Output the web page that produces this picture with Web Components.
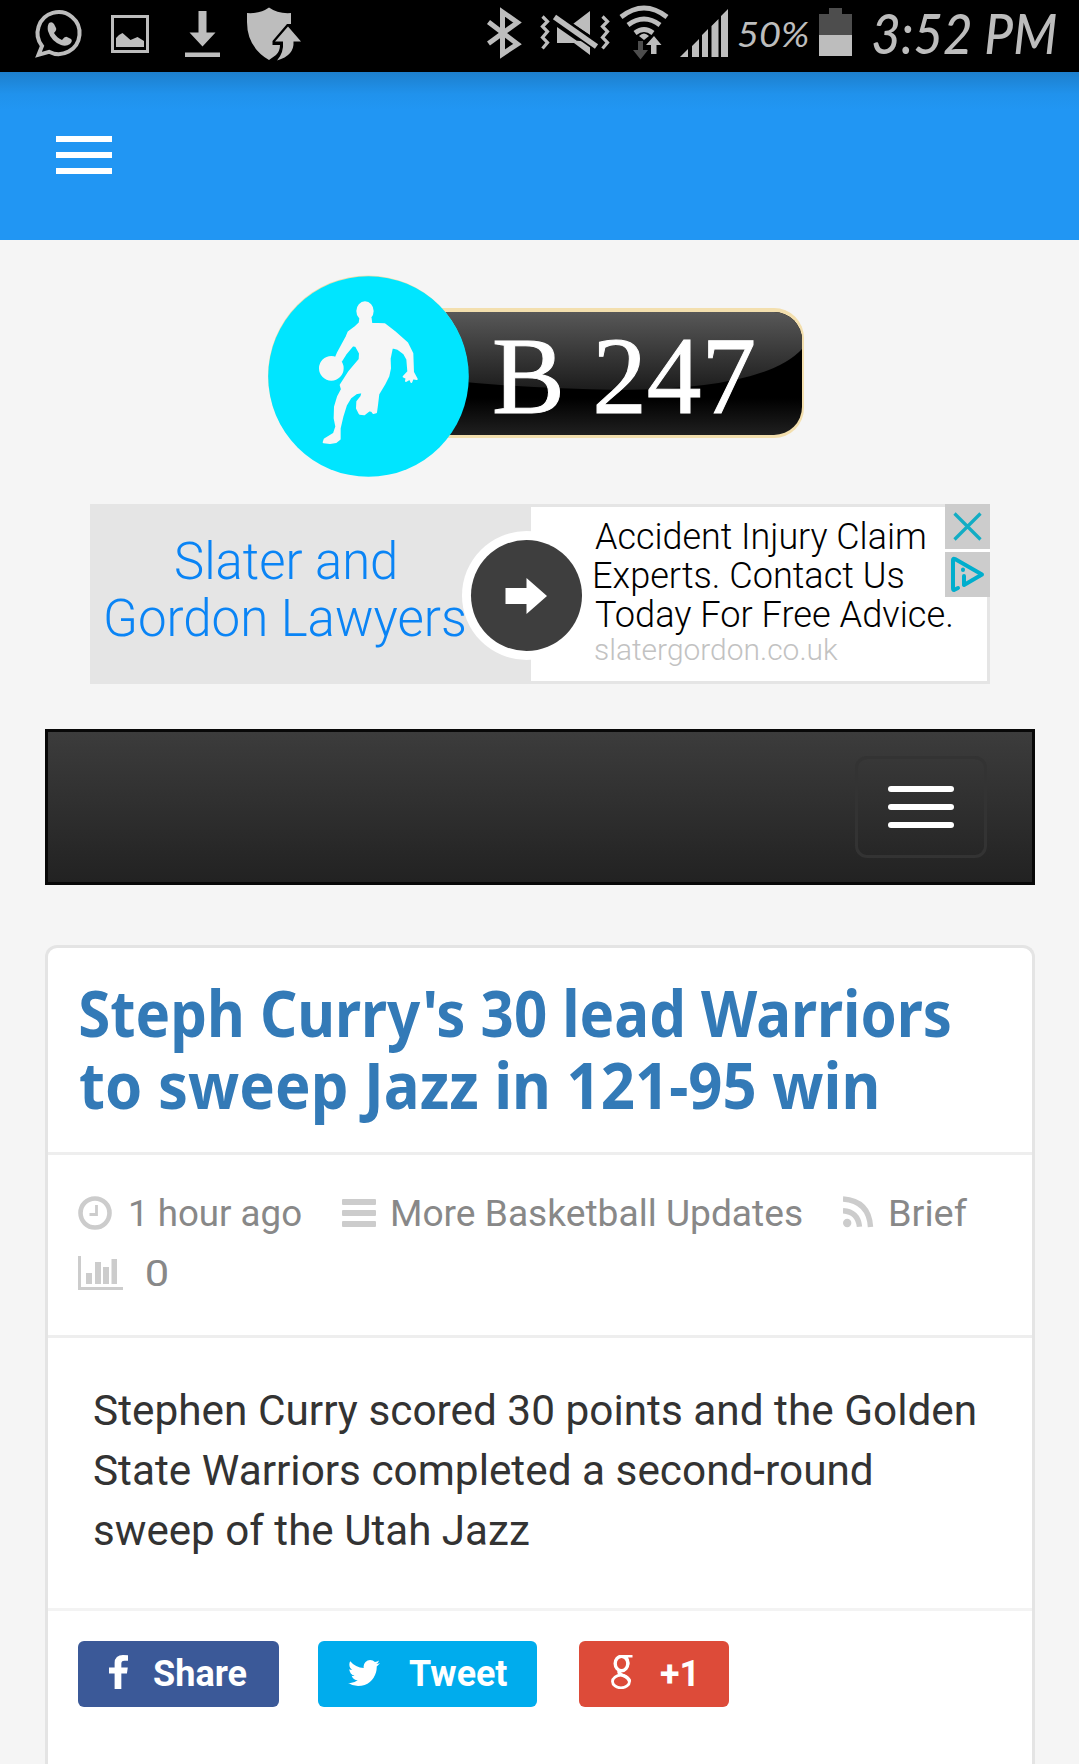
<!DOCTYPE html>
<html lang="en">
<head>
<meta charset="utf-8">
<title>B 247</title>
<style>
html, body { margin: 0; padding: 0; }
body {
  width: 1079px;
  height: 1764px;
  overflow: hidden;
  background: #f5f5f5;
  font-family: Roboto, "Liberation Sans", sans-serif;
}
</style>
</head>
<body>
<b-app>
  <status-bar></status-bar>
  <app-bar></app-bar>
  <site-logo></site-logo>
  <ad-banner>
    <fit-text slot="name" width="219">Slater and</fit-text>
    <fit-text slot="name" width="359">Gordon Lawyers</fit-text>
    <fit-text slot="copy" width="330">Accident Injury Claim</fit-text>
    <fit-text slot="copy" width="308">Experts. Contact Us</fit-text>
    <fit-text slot="copy" width="356">Today For Free Advice.</fit-text>
    <fit-text slot="url" width="243">slatergordon.co.uk</fit-text>
  </ad-banner>
  <nav-bar></nav-bar>
  <news-card>
    <fit-text slot="title" width="870">Steph Curry's 30 lead Warriors</fit-text>
    <fit-text slot="title" width="797">to sweep Jazz in 121-95 win</fit-text>
    <meta-item slot="meta" icon="clock"><fit-text width="170">1 hour ago</fit-text></meta-item>
    <meta-item slot="meta" icon="list"><fit-text width="409">More Basketball Updates</fit-text></meta-item>
    <meta-item slot="meta" icon="rss"><fit-text width="76">Brief</fit-text></meta-item>
    <meta-item slot="stats" icon="chart"><fit-text width="20">0</fit-text></meta-item>
    <fit-text slot="body" width="881">Stephen Curry scored 30 points and the Golden</fit-text>
    <fit-text slot="body" width="777">State Warriors completed a second-round</fit-text>
    <fit-text slot="body" width="435">sweep of the Utah Jazz</fit-text>
    <share-button slot="share" kind="facebook"><fit-text width="93">Share</fit-text></share-button>
    <share-button slot="share" kind="twitter"><fit-text width="98">Tweet</fit-text></share-button>
    <share-button slot="share" kind="google"><fit-text width="33">+1</fit-text></share-button>
  </news-card>
</b-app>

<script>
(function() {
  class BaseElement extends HTMLElement {
    constructor() {
      super();
      let shadowRoot = this.attachShadow({mode: 'open'});
      shadowRoot.innerHTML = this.constructor.template;
    }
  }

  // One line of text, stretched so its ink is exactly `width` pixels wide
  class FitText extends BaseElement {
    static get template() {
      return `
<style>
:host { display: block; flex: none; white-space: nowrap; }
span { display: inline-block; transform-origin: 0 50%; }
</style>
<span><slot></slot></span>
`
    }
    connectedCallback() {
      let width = Number(this.getAttribute('width'));
      let style = getComputedStyle(this);
      let ctx = document.createElement('canvas').getContext('2d');
      ctx.font = `${style.fontStyle} ${style.fontWeight} ${style.fontSize} ${style.fontFamily}`;
      let m = ctx.measureText(this.textContent);
      let scale = width / (m.actualBoundingBoxLeft + m.actualBoundingBoxRight);
      this.style.width = width + 'px';
      this.shadowRoot.querySelector('span').style.transform =
        `scaleX(${scale}) translateX(${m.actualBoundingBoxLeft}px)`;
    }
  }

  class BApp extends BaseElement {
    static get template() {
      return `
<style>
:host { display: flex; flex-direction: column; height: 1764px; }
</style>
<slot></slot>
`
    }
  }

  class StatusBar extends BaseElement {
    static get template() {
      return `
<style>
:host {
  display: flex;
  height: 72px;
  background: #000;
  color: #bdbdbd;
  fill: #bdbdbd;
}
svg { display: block; flex: none; height: 72px; }
.spacer { flex: 1; }
.percent { font: italic 400 34px Lato, sans-serif; line-height: 68px; margin: 0 1px 0 7px; }
.time { font: italic 500 56px Lato, sans-serif; line-height: 65px; margin: 0 23px 0 19px; }
</style>
<svg width="100" viewBox="0 0 100 72">
  <path d="M42 46A21 21 0 1 1 49 51.800L38.500 54.800Z" fill="none" stroke="#bdbdbd" stroke-width="4"/>
  <path d="M49 23q3-2 5 1l2 4q1 2-2 5 3 5 8 7 3-4 5-3l4 2q2 2-1 5-4 3-9 1-10-4-13-14-1-5 1-8z"/>
</svg>
<svg width="70" viewBox="100 0 70 72">
  <path d="M112.500 16.500h35v35h-35z" fill="none" stroke="#bdbdbd" stroke-width="3"/>
  <path d="M116 47V38l3-3 3.500-2 8 7 7-3 6.500 4v6z"/>
</svg>
<svg width="65" viewBox="170 0 65 72">
  <path d="M198.500 11h8v21.500h9L202.500 46.500 189.500 32.500h9zM185 52.500h35v4.500h-35z"/>
</svg>
<svg width="80" viewBox="235 0 80 72">
  <path d="M247 13q13 1 22-5.500 9 6.500 22 5.500v11h-4L272.500 41v4h7.500q0 6-4 10l-7 5q-22-13-22-38z"/>
  <path d="M288 26.500l13 15h-7.500q1 14-16.500 19 7-8 6-19h-8z"/>
</svg>
<div class="spacer"></div>
<svg width="54" viewBox="480 0 54 72">
  <path d="M488.500 22l29 22L502.500 54V12l15 10.500-29 21" fill="none" stroke="#bdbdbd" stroke-width="5"/>
</svg>
<svg width="80" viewBox="534 0 80 72">
  <path d="M542.500 16.500l5 5-5 5 5 5-5 6 5 5-5 6M602.500 16.500l5 5-5 5 5 5-5 6 5 5-5 6" fill="none" stroke="#bdbdbd" stroke-width="3.200"/>
  <path d="M557 27l23 16h-23zM573 24l17-13v24zM570 40l20 2v13z"/>
  <path d="M554 16l44 31" stroke="#000" stroke-width="10"/>
  <path d="M554.500 17l42 29.500" stroke="#bdbdbd" stroke-width="5.500"/>
</svg>
<svg width="61" viewBox="614 0 61 72">
  <path d="M621 17q23-18 46 0M628 25q16-12 32 0M635 33q9-7 18 0" fill="none" stroke="#bdbdbd" stroke-width="4.800"/>
  <path d="M639 36q5-5 10 0l-5 4z"/>
  <path d="M638 41h5v9h5l-7.500 9.500L633 50h5z" fill="#4d4d4d"/>
  <path d="M651 54h5.500v-9h5L654 36l-8 9h5z"/>
</svg>
<svg width="56" viewBox="675 0 56 72">
  <path d="M680 57l8-8v8zM692 57V46l7-7v18zM702 57V35l6-6v28zM711.500 57V26l7-7v38zM721 57V16l7-7v48z"/>
</svg>
<fit-text class="percent" width="71">50%</fit-text>
<svg width="44" viewBox="810 0 44 72">
  <path d="M819 14h10V8h13v6h10v21h-33z" fill="#4d4d4d"/>
  <path d="M819 35h33v21h-33z"/>
</svg>
<fit-text class="time" width="183">3:52 PM</fit-text>
`
    }
  }

  class AppBar extends BaseElement {
    static get template() {
      return `
<style>
:host {
  display: flex;
  flex-direction: column;
  gap: 10px;
  box-sizing: border-box;
  height: 168px;
  padding: 64px 56px 0;
  background: linear-gradient(#1d7fcd, #2092ec 22px, #2196f3 38px);
}
i { width: 56px; height: 6px; background: #fff; }
</style>
<i></i><i></i><i></i>
`
    }
  }

  class SiteLogo extends BaseElement {
    static get template() {
      return `
<style>
:host { display: block; padding: 34px 0 26px 267px; }
svg { display: block; }
text { font-family: "Liberation Serif", serif; font-size: 111px; fill: #fff; stroke: #fff; stroke-width: 1px; }
</style>
<svg width="540" height="204" viewBox="267 274 540 204">
  <defs>
    <linearGradient id="gloss" x1="0" y1="0" x2="0" y2="1">
      <stop offset="0" stop-color="#585858"/>
      <stop offset="1" stop-color="#1c1c1c"/>
    </linearGradient>
    <linearGradient id="base" x1="0" y1="0" x2="0" y2="1">
      <stop offset=".7" stop-color="#000"/>
      <stop offset="1" stop-color="#202020"/>
    </linearGradient>
    <clipPath id="pill"><rect x="400" y="312" width="402" height="123" rx="28"/></clipPath>
  </defs>
  <rect x="398" y="308" width="406" height="130" rx="30" fill="#f3dfae"/>
  <rect x="400" y="312" width="402" height="123" rx="28" fill="url(#base)"/>
  <path clip-path="url(#pill)" d="M400 312H802V349Q765 389 620 390Q490 388 400 374Z" fill="url(#gloss)"/>
  <circle cx="368" cy="375.500" r="100" fill="#f2dfa8"/>
  <circle cx="368.500" cy="376.500" r="100.300" fill="#00e5ff"/>
  <g transform="translate(250 260) scale(.33333)" fill="#f6f6f6" stroke="#f6f6f6" stroke-width="6" stroke-linejoin="round">
    <ellipse cx="345" cy="153" rx="23" ry="26"/>
    <path d="M331 175L329 189 314 203 296 216 290 230 264 278 258 292 274 302 288 280 308 256 318 258 330 280 329 298 298 335 272 375 276 388 264 410 255 440 254 475 259 500 252 521 224 538 221 547 240 549 258 546 269 537 269 505 277 470 288 435 302 412 318 400 338 396 334 410 322 425 321 445 329 461 343 463 358 451 366 453 370 459 378 457 381 435 385 402 403 372 415 348 420 325 419 296 426 262 443 266 462 280 472 298 475 335 461 350 470 354 468 363 480 356 484 366 488 355 500 357 489 337 487 280 472 250 434 216 404 193 364 191 362 175Z"/>
    <circle cx="244" cy="325" r="34"/>
  </g>
  <text x="492" y="413" textLength="264" lengthAdjust="spacingAndGlyphs">B 247</text>
</svg>
`
    }
  }

  class AdBanner extends BaseElement {
    static get template() {
      return `
<style>
:host {
  display: flex;
  position: relative;
  box-sizing: border-box;
  width: 900px;
  height: 180px;
  margin-left: 90px;
  padding: 3px 3px 3px 0;
  background: #e5e5e5;
  font-weight: 300;
}
.name {
  display: flex;
  flex-direction: column;
  align-items: center;
  box-sizing: border-box;
  width: 441px;
  padding: 26px 51px 0 0;
  color: #0a84f5;
  font-size: 51px;
  line-height: 57px;
}
.copy {
  flex: 1;
  padding: 10px 0 0 64px;
  background: #fff;
  color: #000;
  font-size: 37px;
  line-height: 39px;
}
.url { color: #c2c2c2; font-size: 30px; line-height: 32px; }
.arrow { position: absolute; left: 372px; top: 27px; }
.controls {
  position: absolute;
  right: 0;
  top: 0;
  display: flex;
  flex-direction: column;
  gap: 3px;
  background: #fff;
}
.controls svg { display: block; background: #ccc; }
</style>
<div class="name"><slot name="name"></slot></div>
<div class="copy">
  <slot name="copy"></slot>
  <div class="url"><slot name="url"></slot></div>
</div>
<svg class="arrow" width="130" height="130" viewBox="462 531 130 130">
  <circle cx="526.500" cy="595.500" r="64.500" fill="#fff"/>
  <circle cx="526.500" cy="595.500" r="55.500" fill="#3e3e3e"/>
  <path d="M505.500 588H526.500V578L547 596 526.500 614V604H505.500Z" fill="#fff"/>
</svg>
<div class="controls">
  <svg width="45" height="45" fill="none" stroke="#12adc4" stroke-width="3.200">
    <path d="M9.500 9.500l26 26M35.500 9.500l-26 26"/>
  </svg>
  <svg width="45" height="45" fill="none" stroke="#00aecd" stroke-width="4" stroke-linejoin="round" stroke-linecap="round">
    <path d="M13 36l-4 2q-1 0-1-2V8q0-2 2-1l27 15.500L19 33V24M18 17.500v.5"/>
  </svg>
</div>
`
    }
  }

  class NavBar extends BaseElement {
    static get template() {
      return `
<style>
:host {
  display: flex;
  justify-content: flex-end;
  align-items: flex-start;
  box-sizing: border-box;
  width: 990px;
  height: 156px;
  margin: 45px 0 60px 45px;
  padding: 24px 45px;
  border: 3px solid #080808;
  background: linear-gradient(#3c3c3c, #222);
}
div {
  display: flex;
  flex-direction: column;
  gap: 12px;
  box-sizing: border-box;
  width: 132px;
  height: 102px;
  padding: 27px 30px;
  border: 3px solid #333;
  border-radius: 12px;
}
i { width: 66px; height: 6px; border-radius: 3px; background: #fff; }
</style>
<div><i></i><i></i><i></i></div>
`
    }
  }

  class NewsCard extends BaseElement {
    static get template() {
      return `
<style>
:host {
  display: block;
  flex: 1;
  box-sizing: border-box;
  width: 990px;
  margin-left: 45px;
  border: 3px solid #e4e4e4;
  border-bottom: 0;
  border-radius: 12px 12px 0 0;
  background: #fff;
}
.title {
  padding: 29px 32px 31px;
  border-bottom: 3px solid #eee;
  color: #337ab7;
  font-family: "Noto Sans", "Open Sans", sans-serif;
  font-size: 64px;
  font-weight: 700;
  line-height: 72px;
}
.meta {
  padding: 29px 30px 31px;
  border-bottom: 3px solid #eee;
  color: #888;
  font-size: 37px;
  line-height: 60px;
}
.row { display: flex; gap: 41px; }
.body {
  padding: 43px 46px 47px;
  border-bottom: 3px solid #f3f3f3;
  color: #333;
  font-size: 42px;
  line-height: 60px;
}
.share { display: flex; padding: 30px; }
</style>
<div class="title"><slot name="title"></slot></div>
<div class="meta">
  <div class="row"><slot name="meta"></slot></div>
  <div class="row"><slot name="stats"></slot></div>
</div>
<div class="body"><slot name="body"></slot></div>
<div class="share"><slot name="share"></slot></div>
`
    }
  }

  const META_ICONS = {
    clock: `<svg width="34" height="34" style="margin-right:19px">
      <circle cx="17" cy="17" r="14.500" fill="none" stroke="#ccc" stroke-width="4.600"/>
      <path d="M18.500 9v9.500h-7" fill="none" stroke="#ccc" stroke-width="2.800"/></svg>`,
    list: `<svg width="34" height="34" style="margin-right:17px">
      <rect y="3" width="34" height="6" rx="1"/><rect y="14" width="34" height="6" rx="1"/>
      <rect y="25" width="34" height="6" rx="1"/></svg>`,
    rss: `<svg width="31" height="34" style="margin-right:17px">
      <circle cx="4.200" cy="27" r="4.200"/>
      <path d="M0 14.700q15 1 16.500 16M0 3q26 2 27.500 28" fill="none" stroke="#ccc" stroke-width="5.400"/></svg>`,
    chart: `<svg width="45" height="34" style="margin-right:24px">
      <path d="M0 0h3v31h42v3H0zM8 17h6v11H8zM17 6h6v22h-6zM25 11h6v17h-6zM33.500 3h5.500v25h-5.500z"/></svg>`
  };

  class MetaItem extends BaseElement {
    static get template() {
      return `
<style>
:host { display: flex; }
svg { display: block; flex: none; margin-top: 12px; fill: #ccc; }
</style>
<slot></slot>
`
    }
    connectedCallback() {
      let slot = this.shadowRoot.querySelector('slot');
      slot.insertAdjacentHTML('beforebegin', META_ICONS[this.getAttribute('icon')]);
    }
  }

  const SHARE_ICONS = {
    facebook: `<svg width="19" height="34" viewBox="95 -1536 864 1664" preserveAspectRatio="none">
      <path transform="scale(1 -1)" d="M959 1524v-264h-157q-86 0 -116 -36t-30 -108v-189h293l-39 -296h-254v-759h-306v759h-255v296h255v218q0 186 104 288.500t277 102.500q147 0 228 -12z"/></svg>`,
    twitter: `<svg width="32" height="26" viewBox="44 -1280 1576 1280" preserveAspectRatio="none">
      <path transform="scale(1 -1)" d="M1620 1128q-67 -98 -162 -167q1 -14 1 -42q0 -130 -38 -259.500t-115.500 -248.500t-184.500 -210.500t-258 -146t-323 -54.500q-271 0 -496 145q35 -4 78 -4q225 0 401 138q-105 2 -188 64.500t-114 159.500q33 -5 61 -5q43 0 85 11q-112 23 -185.500 111.500t-73.500 205.500v4q68 -38 146 -41q-66 44 -105 115t-39 154q0 88 44 163q121 -149 294.500 -238.500t371.500 -99.500q-8 38 -8 74q0 134 94.500 228.500t228.500 94.500q140 0 236 -102q109 21 205 78q-37 -115 -142 -178q93 10 186 50z"/></svg>`,
    google: `<svg width="22" height="34" fill="none" stroke="#fff">
      <ellipse cx="10.500" cy="8.500" rx="6.300" ry="7.200" stroke-width="3.400"/>
      <ellipse cx="10" cy="26.500" rx="8.500" ry="6.300" stroke-width="2.800"/>
      <path d="M10 1.300h11.500M15 2q3 3 2 8" stroke-width="2.400"/>
      <path d="M9 15q-3 3 3 5.500 6 2.500 6.500 6" stroke-width="3.400"/></svg>`
  };

  class ShareButton extends BaseElement {
    static get template() {
      return `
<style>
:host {
  display: flex;
  box-sizing: border-box;
  height: 66px;
  border-radius: 6px;
  color: #fff;
  fill: #fff;
  font-size: 37px;
  font-weight: 700;
  line-height: 66px;
}
:host([kind="facebook"]) { width: 201px; padding-left: 31px; margin-right: 39px; background: #3b5998; }
:host([kind="twitter"]) { width: 219px; padding-left: 30px; margin-right: 42px; background: #00aced; }
:host([kind="google"]) { width: 150px; padding-left: 32px; background: #dd4b39; }
svg { display: block; flex: none; margin-top: 14px; }
:host([kind="facebook"]) svg { margin-right: 26px; }
:host([kind="twitter"]) svg { margin: 19px 29px 0 0; }
:host([kind="google"]) svg { margin-right: 28px; }
</style>
<slot></slot>
`
    }
    connectedCallback() {
      let slot = this.shadowRoot.querySelector('slot');
      slot.insertAdjacentHTML('beforebegin', SHARE_ICONS[this.getAttribute('kind')]);
    }
  }

  customElements.define('b-app', BApp);
  customElements.define('status-bar', StatusBar);
  customElements.define('app-bar', AppBar);
  customElements.define('site-logo', SiteLogo);
  customElements.define('ad-banner', AdBanner);
  customElements.define('nav-bar', NavBar);
  customElements.define('news-card', NewsCard);
  customElements.define('meta-item', MetaItem);
  customElements.define('share-button', ShareButton);
  // last, so the inherited fonts are in place when lines are measured
  customElements.define('fit-text', FitText);
})();
</script>
</body>
</html>
